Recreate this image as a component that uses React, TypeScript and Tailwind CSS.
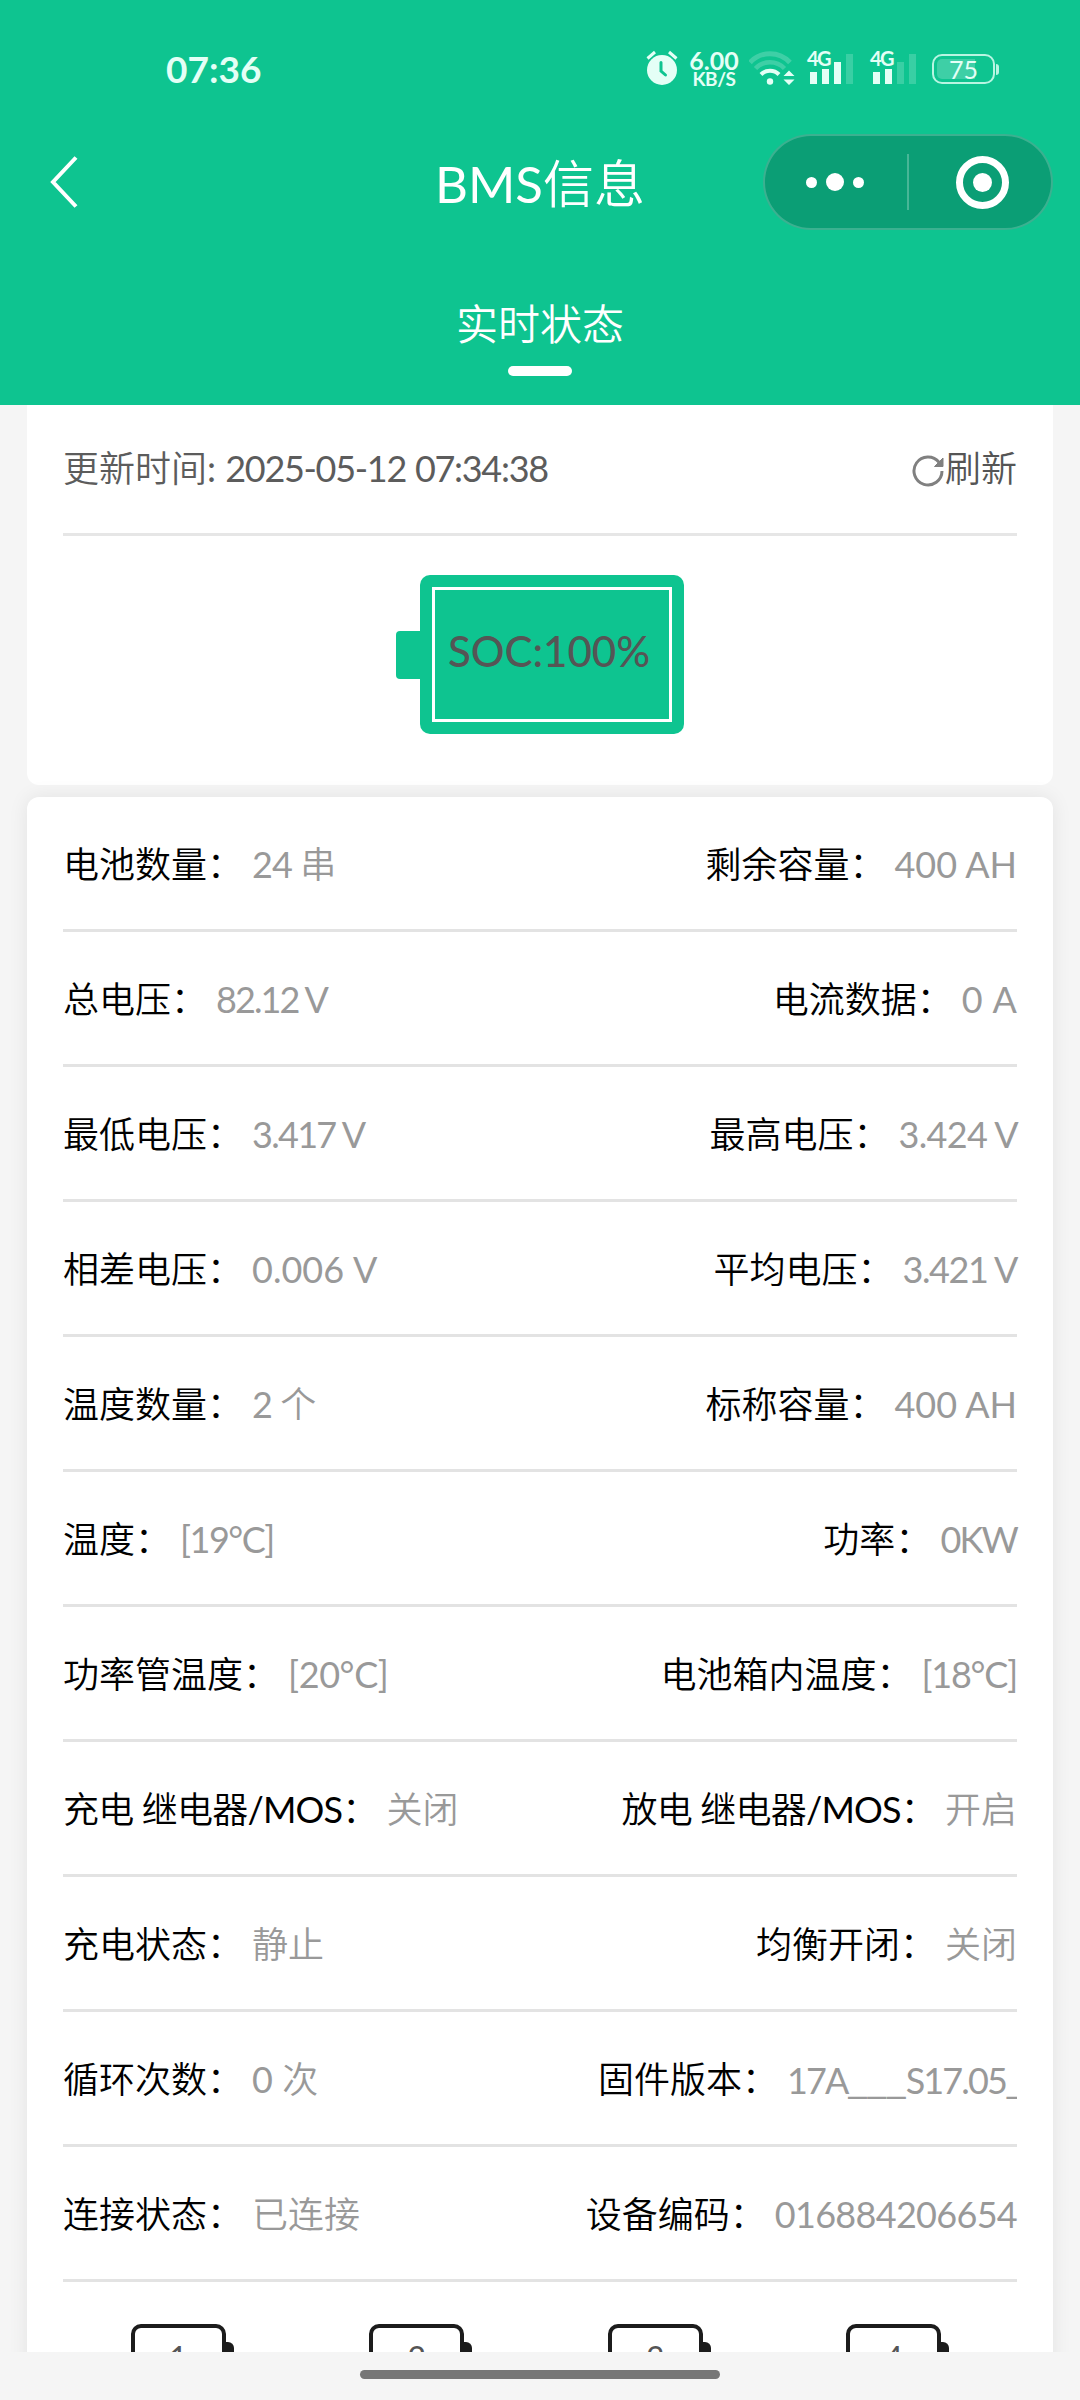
import { clsx } from "clsx";

// ==================== 类型与数据 ====================

interface Field {
  label: string;
  value: string;
  labelClass?: string;
  valueClass?: string;
}

const ROWS: [Field, Field][] = [
  [
    { label: "电池数量", value: "24 串", valueClass: "tracking-[-0.9px]" },
    { label: "剩余容量", value: "400 AH" },
  ],
  [
    { label: "总电压", value: "82.12 V", valueClass: "tracking-[-1.9px]" },
    { label: "电流数据", value: "0 A", valueClass: "[word-spacing:2px]" },
  ],
  [
    { label: "最低电压", value: "3.417 V", valueClass: "tracking-[-1.7px]" },
    { label: "最高电压", value: "3.424 V", valueClass: "-mr-px tracking-[-0.7px]" },
  ],
  [
    { label: "相差电压", value: "0.006 V", valueClass: "[word-spacing:1px]" },
    { label: "平均电压", value: "3.421 V", valueClass: "tracking-[-1.4px]" },
  ],
  [
    { label: "温度数量", value: "2 个", valueClass: "tracking-[-1px]" },
    { label: "标称容量", value: "400 AH" },
  ],
  [
    { label: "温度", value: "[19°C]", valueClass: "tracking-[-1.5px]" },
    { label: "功率", value: "0KW", valueClass: "tracking-[-1.8px]" },
  ],
  [
    { label: "功率管温度", value: "[20°C]", valueClass: "tracking-[-0.4px]" },
    { label: "电池箱内温度", value: "[18°C]", valueClass: "tracking-[-1.2px]" },
  ],
  [
    { label: "充电 继电器/MOS", value: "关闭", labelClass: "tracking-[-0.8px]" },
    { label: "放电 继电器/MOS", value: "开启", labelClass: "tracking-[-0.8px]" },
  ],
  [
    { label: "充电状态", value: "静止" },
    { label: "均衡开闭", value: "关闭" },
  ],
  [
    { label: "循环次数", value: "0 次" },
    {
      label: "固件版本",
      value: "17A___S17.05_",
      valueClass: "w-[230px] overflow-hidden tracking-[-1.9px]",
    },
  ],
  [
    { label: "连接状态", value: "已连接" },
    { label: "设备编码", value: "016884206654", valueClass: "tracking-[-0.7px]" },
  ],
];

const CELLS = [1, 2, 3, 4];

// ==================== 状态栏 ====================

const AlarmIcon = () => (
  <svg width="32" height="36" viewBox="0 0 32 36" fill="none">
    <circle cx="16" cy="20" r="15" fill="#e4fff6" />
    <path d="M1.5 8.5 9 2M30.500 8.500 23 2" stroke="#e4fff6" strokeWidth="3" />
    <path
      d="M15 12.500v8.500l4.500 4"
      stroke="#0ec490"
      strokeWidth="3"
      strokeLinecap="round"
    />
  </svg>
);

const WifiIcon = () => (
  <svg width="48" height="36" viewBox="0 0 48 36" fill="none">
    <path d="M1 12.500a27 27 0 0 1 40 0" stroke="#fff" strokeOpacity=".2" strokeWidth="5" />
    <path d="M6.500 18.500a20 20 0 0 1 29 0" stroke="#fff" strokeOpacity=".2" strokeWidth="4.500" />
    <path d="M12 24.500a12.500 12.500 0 0 1 18 0" stroke="#e4fff6" strokeWidth="4" />
    <circle cx="21" cy="31.500" r="3.200" fill="#e4fff6" />
    <path d="M34.500 26 40 20.500l5.500 5.500zM34.500 29.500 40 35l5.500-5.500z" fill="#e4fff6" />
  </svg>
);

const SignalIcon = ({ level }: { level: number }) => (
  <div className="relative h-9 w-[46px]">
    <svg width="46" height="36" viewBox="0 0 46 36" fill="#e4fff6">
      <rect x="3" y="22" width="7" height="12" />
      <rect x="15" y="19" width="7" height="15" />
      <rect x="27" y="12" width="7" height="22" fillOpacity={level > 2 ? 1 : 0.2} />
      <rect x="39" y="4" width="7" height="30" fillOpacity=".2" />
    </svg>
    <span className="absolute -top-1 left-0 text-[20px] leading-[24px] font-bold tracking-[-1.5px]">
      4G
    </span>
  </div>
);

const StatusBar = () => (
  <div className="flex h-[138px] items-start pr-[81px] pl-[166px] font-['Lato',sans-serif] text-[#e4fff6]">
    <span className="mt-[49px] text-[37px] leading-[40px] font-bold">
      07:36
    </span>
    <div className="mt-[50px] ml-auto flex items-start">
      <AlarmIcon />
      <div className="-mt-px ml-[9px] flex w-[54px] flex-col items-center font-bold">
        <span className="text-[25px] leading-[22px]">6.00</span>
        <span className="text-[19px] leading-[16px] tracking-[-0.5px]">KB/S</span>
      </div>
      <div className="ml-2">
        <WifiIcon />
      </div>
      <div className="ml-[10px]">
        <SignalIcon level={3} />
      </div>
      <div className="ml-[17px]">
        <SignalIcon level={2} />
      </div>
      <div className="mt-1 ml-[16px] flex items-center">
        <div className="relative flex h-[30px] w-[63px] items-center justify-center rounded-[10px] border-[2.500px] border-[#b8f5e2]">
          <div className="absolute inset-y-[3px] left-[3px] w-[38px] rounded-l-[5px] bg-white/20" />
          <span className="relative text-[25px] leading-[30px]">75</span>
        </div>
        <div className="ml-px h-[11px] w-[3px] rounded-r-sm bg-[#b8f5e2]" />
      </div>
    </div>
  </div>
);

// ==================== 导航栏 ====================

const NavBar = () => (
  <div className="-mt-1 grid h-[90px] grid-cols-[1fr_auto_1fr] items-center px-[27px]">
    <svg className="ml-[21px]" width="30" height="54" viewBox="0 0 30 54" fill="none">
      <path d="M28 2.500 5 27l23 24.500" stroke="#fff" strokeWidth="4" />
    </svg>
    <h1 className="pt-[3px] text-[51px] leading-[60px]">BMS信息</h1>
    <div className="flex h-24 w-[290px] items-center justify-self-end rounded-full border-2 border-white/20 bg-[#0b9e75]">
      <div className="flex w-[142px] items-center justify-center gap-[9px] pr-0.5">
        <i className="size-[11px] rounded-full bg-white" />
        <i className="size-[18px] rounded-full bg-white" />
        <i className="size-[11px] rounded-full bg-white" />
      </div>
      <div className="h-14 w-0.5 bg-white/25" />
      <div className="flex flex-1 items-center justify-center pl-1">
        <div className="flex size-[53px] items-center justify-center rounded-full border-[7px] border-white">
          <i className="size-[19px] rounded-full bg-white" />
        </div>
      </div>
    </div>
  </div>
);

// ==================== 电量概览 ====================

const RefreshIcon = () => (
  <svg className="mt-[7px]" width="34" height="34" viewBox="0 0 34 34" fill="none" stroke="#808080" strokeWidth="3">
    <path d="M31 17A14 14 0 1 1 28 8.300" />
    <path d="M32 4v8.500h-8.500z" fill="#808080" strokeWidth="1" />
  </svg>
);

const SocCard = () => (
  <section className="h-[380px] shrink-0 rounded-b-[12px] bg-white px-9">
    <div className="flex h-[131px] items-center justify-between border-b-3 border-[#e6e6e6] pb-[3px] text-[36px] text-[#5c5c5c]">
      <span>
        更新时间:{" "}
        <span className="tracking-[-1.3px] [word-spacing:1px]">
          2025-05-12 07:34:38
        </span>
      </span>
      <span className="flex items-center text-[#555]">
        <RefreshIcon />
        刷新
      </span>
    </div>
    <div className="mt-[39px] flex items-center justify-center">
      <div className="h-12 w-6 rounded-l-[4px] bg-[#0ec490]" />
      <div className="h-[159px] w-[264px] rounded-[10px] bg-[#0ec490] p-3">
        <div className="flex h-full items-center justify-center border-3 border-white pr-1.5 pb-1.5 text-[42px] font-medium text-[#555]">
          SOC:100%
        </div>
      </div>
    </div>
  </section>
);

// ==================== 明细列表 ====================

const FieldItem = ({ label, value, labelClass, valueClass }: Field) => (
  <div className="flex items-center whitespace-nowrap">
    <span className={clsx("text-black", labelClass)}>{label}：</span>
    <span className={clsx("ml-[9px] text-[#999]", valueClass)}>
      {value.split(/(_+)/).map((part, i) =>
        part.startsWith("_") ? (
          <span key={i} className="font-['Noto_Sans_CJK_SC',sans-serif] tracking-[-0.7px]">
            {part}
          </span>
        ) : (
          part
        ),
      )}
    </span>
  </div>
);

const Cell = ({ index }: { index: number }) => (
  <div className="flex flex-1 justify-center pt-[42px]">
    <div className="h-[66px] w-[95px] rounded-[10px] border-4 border-[#1c1c1c] text-center text-[32px] leading-[60px] text-[#555]">
      {index}
    </div>
    <div className="mt-[18px] h-[30px] w-2 rounded-r-[6px] bg-[#1c1c1c]" />
  </div>
);

const DetailCard = () => (
  <section className="mt-3 flex-1 rounded-t-[12px] bg-white px-9 shadow-[0_0_20px_rgba(0,0,0,0.08)]">
    {ROWS.map(([left, right]) => (
      <div
        key={left.label}
        className="flex h-[135px] items-center justify-between border-b-3 border-[#e3e3e3] pt-px text-[36px]"
      >
        <FieldItem {...left} />
        <FieldItem {...right} />
      </div>
    ))}
    <div className="flex">
      {CELLS.map((index) => (
        <Cell key={index} index={index} />
      ))}
    </div>
  </section>
);

// ==================== 页面 ====================

export default function App() {
  return (
    <div className="flex h-[2400px] w-[1080px] flex-col overflow-hidden bg-[#f5f5f5] font-['Lato','Noto_Sans_CJK_SC_DemiLight','Noto_Sans_CJK_SC',sans-serif]">
      <header className="h-[405px] shrink-0 bg-[#0ec490] text-white">
        <StatusBar />
        <NavBar />
        <div className="flex flex-col items-center pt-[70px]">
          <span className="text-[42px] leading-[60px]">实时状态</span>
          <div className="mt-3 h-[10px] w-16 rounded-full bg-white" />
        </div>
      </header>
      <main className="flex h-[1947px] shrink-0 flex-col overflow-hidden px-[27px]">
        <SocCard />
        <DetailCard />
      </main>
      <div className="mt-[18px] h-[9px] w-[360px] self-center rounded-full bg-[#777]" />
    </div>
  );
}
